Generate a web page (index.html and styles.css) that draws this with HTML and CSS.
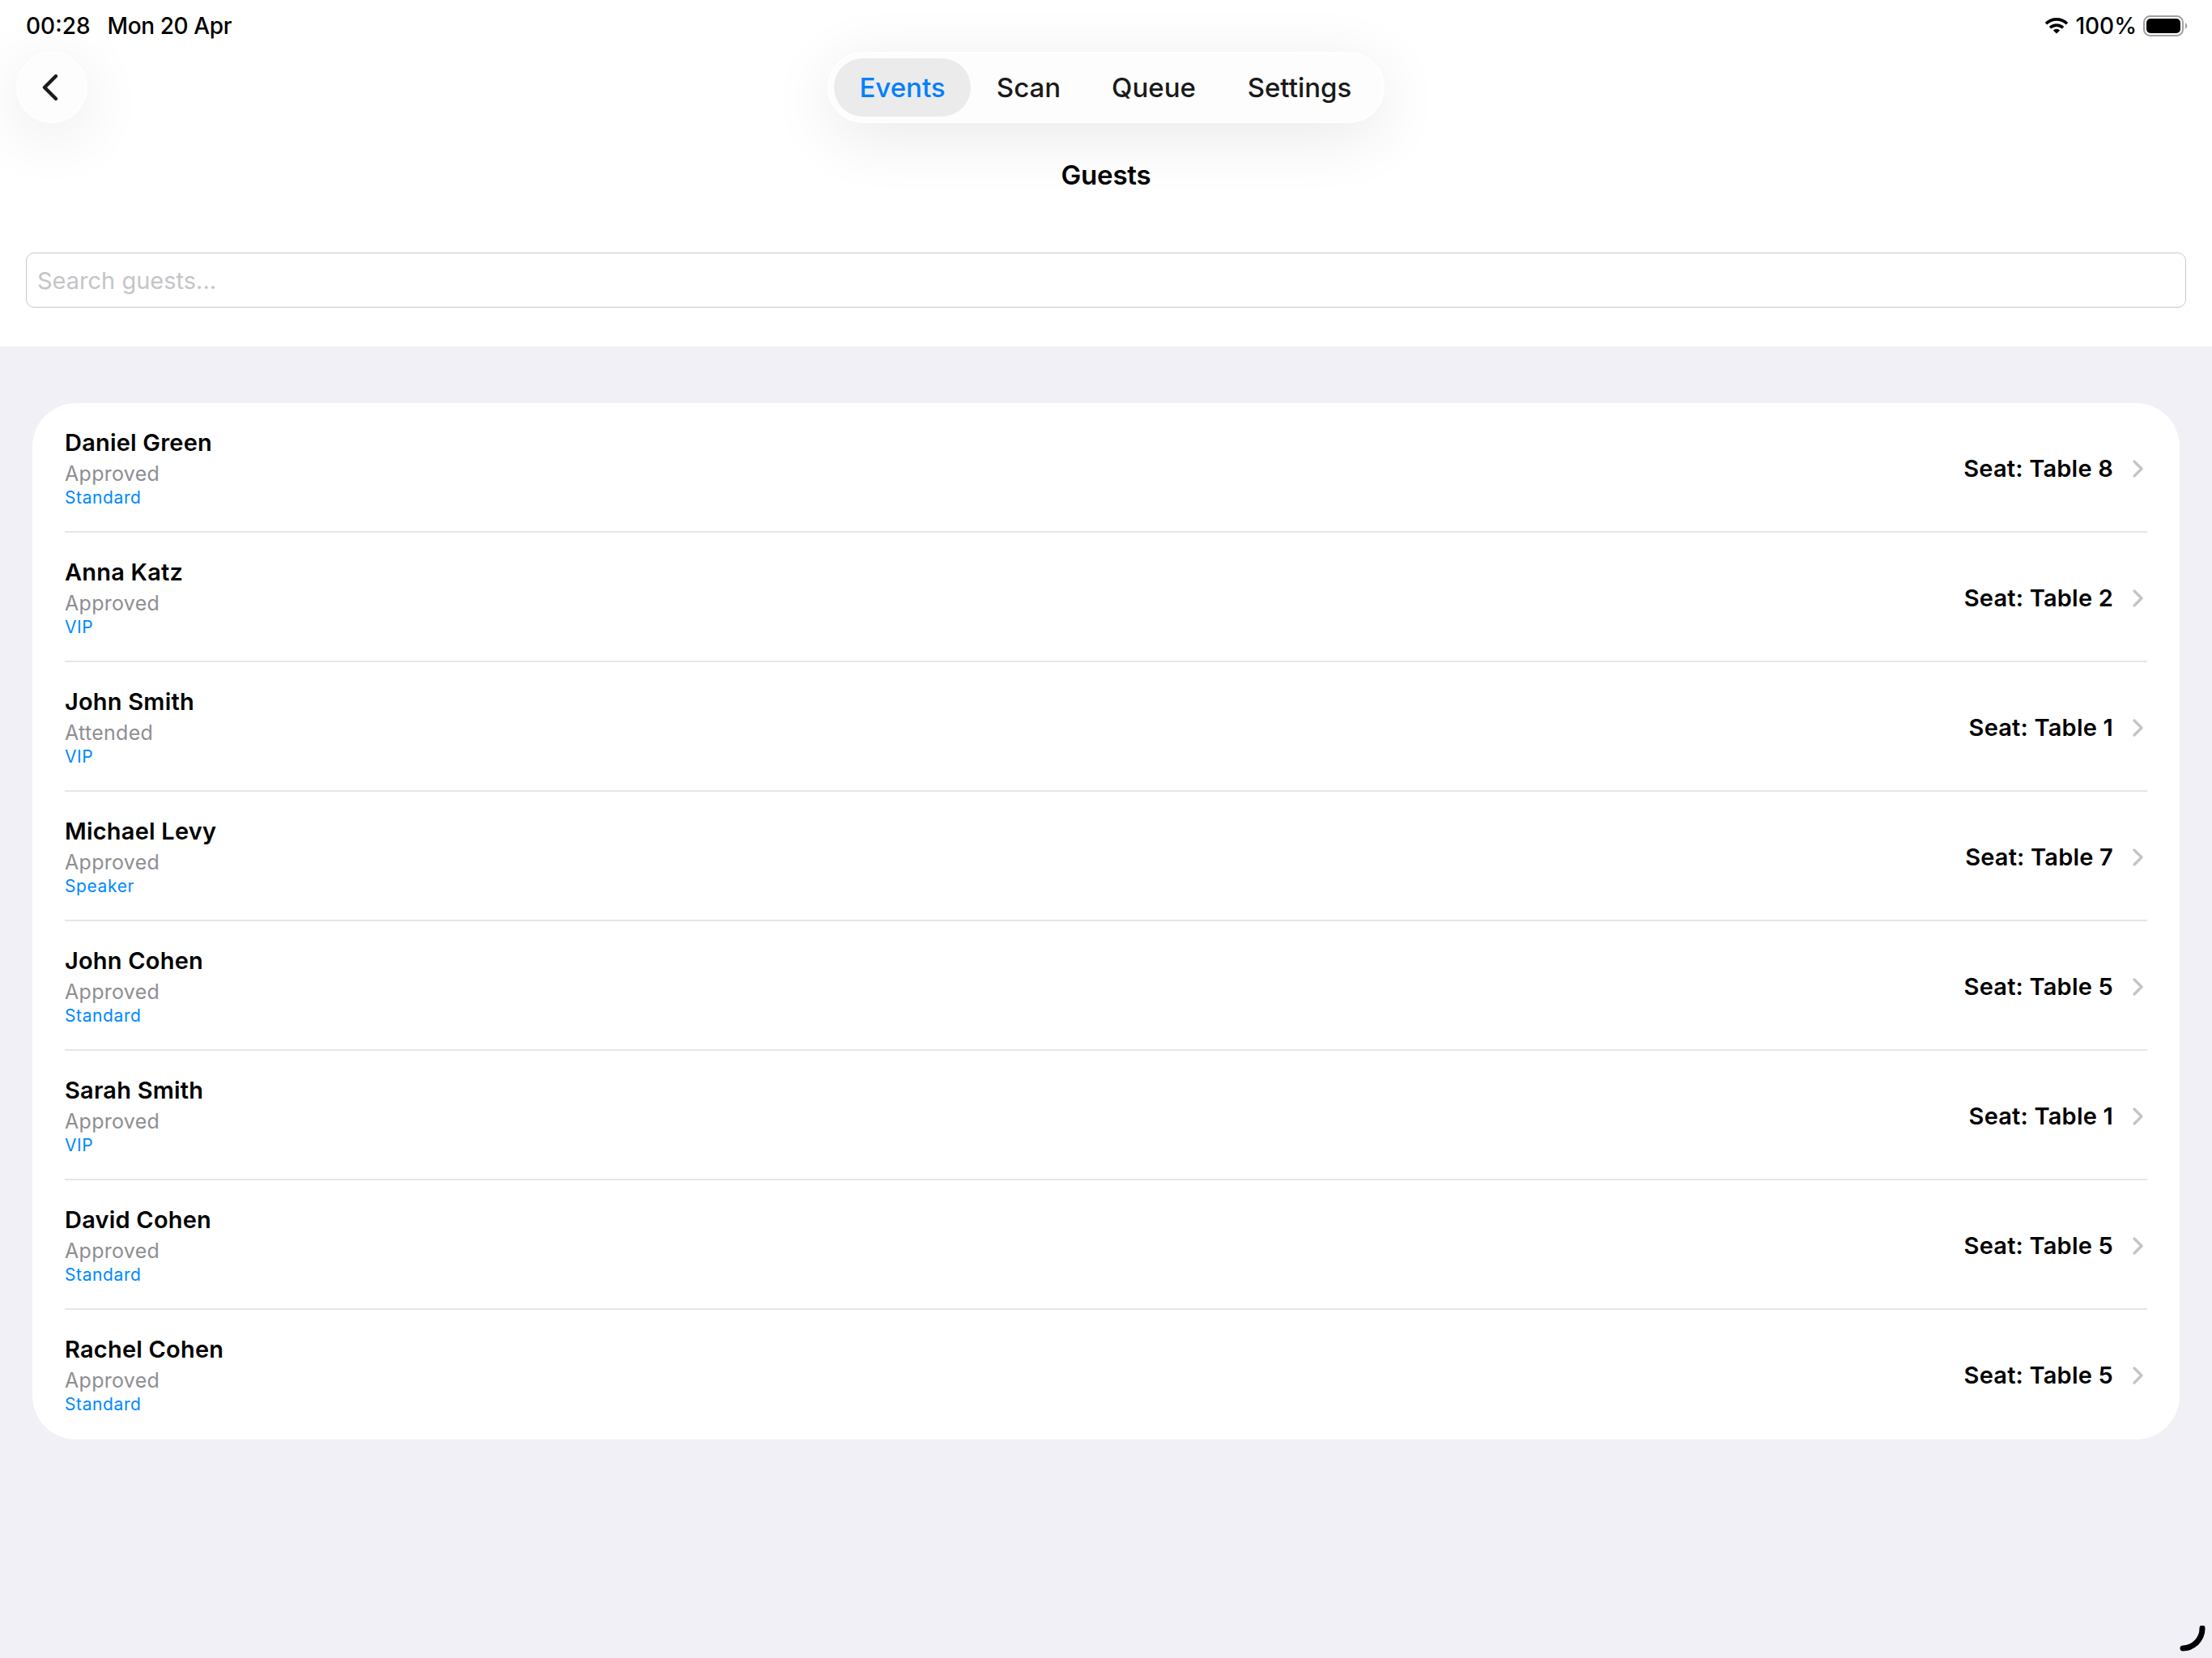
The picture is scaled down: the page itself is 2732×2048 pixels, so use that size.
FILE: index.html
```html
<!DOCTYPE html>
<html lang="en">

<head>
    <meta charset="UTF-8">
    <title>Guests</title>
    <link rel="stylesheet" href="styles.css">
</head>

<body>
    <div class="top">
        <div class="status">
            <span class="time">00:28</span>
            <span class="date">Mon 20 Apr</span>
            <svg class="wifi" viewBox="0 0 30 22">
                <path d="M2 8.2a18.6 18.6 0 0 1 26 0M7 13.3a11.6 11.6 0 0 1 16 0" fill="none" stroke="#000" stroke-width="3.6" />
                <path d="M15 20.6l-4.2-4.2a6 6 0 0 1 8.4 0z" />
            </svg>
            <span class="percent">100%</span>
            <svg class="battery" viewBox="0 0 56 26">
                <rect x="1" y="1" width="48" height="24" rx="7.5" fill="none" stroke="#a0a0a0" stroke-width="2" />
                <rect x="4" y="4" width="42" height="18" rx="5" />
                <path d="M52 9a4.6 4.6 0 0 1 0 8z" fill="#a0a0a0" />
            </svg>
        </div>
        <div class="bar">
            <div class="back">
                <svg viewBox="0 0 22 34">
                    <path d="M18 3L4 17l14 14" />
                </svg>
            </div>
            <div class="tabs">
                <span class="tab active">Events</span>
                <span class="tab scan">Scan</span>
                <span class="tab queue">Queue</span>
                <span class="tab settings">Settings</span>
            </div>
        </div>
        <h1 class="title">Guests</h1>
        <input class="search" type="text" placeholder="Search guests...">
    </div>

    <div class="list">
        <div class="row">
            <div class="guest">
                <p class="name">Daniel Green</p>
                <p class="state">Approved</p>
                <p class="type">Standard</p>
            </div>
            <span class="seat">Seat: Table 8</span>
            <svg class="more" viewBox="0 0 16 24"><path d="M3 3l9 9-9 9" /></svg>
        </div>
        <div class="row">
            <div class="guest">
                <p class="name">Anna Katz</p>
                <p class="state">Approved</p>
                <p class="type">VIP</p>
            </div>
            <span class="seat">Seat: Table 2</span>
            <svg class="more" viewBox="0 0 16 24"><path d="M3 3l9 9-9 9" /></svg>
        </div>
        <div class="row">
            <div class="guest">
                <p class="name">John Smith</p>
                <p class="state">Attended</p>
                <p class="type">VIP</p>
            </div>
            <span class="seat">Seat: Table 1</span>
            <svg class="more" viewBox="0 0 16 24"><path d="M3 3l9 9-9 9" /></svg>
        </div>
        <div class="row">
            <div class="guest">
                <p class="name">Michael Levy</p>
                <p class="state">Approved</p>
                <p class="type">Speaker</p>
            </div>
            <span class="seat">Seat: Table 7</span>
            <svg class="more" viewBox="0 0 16 24"><path d="M3 3l9 9-9 9" /></svg>
        </div>
        <div class="row">
            <div class="guest">
                <p class="name">John Cohen</p>
                <p class="state">Approved</p>
                <p class="type">Standard</p>
            </div>
            <span class="seat">Seat: Table 5</span>
            <svg class="more" viewBox="0 0 16 24"><path d="M3 3l9 9-9 9" /></svg>
        </div>
        <div class="row">
            <div class="guest">
                <p class="name">Sarah Smith</p>
                <p class="state">Approved</p>
                <p class="type">VIP</p>
            </div>
            <span class="seat">Seat: Table 1</span>
            <svg class="more" viewBox="0 0 16 24"><path d="M3 3l9 9-9 9" /></svg>
        </div>
        <div class="row">
            <div class="guest">
                <p class="name">David Cohen</p>
                <p class="state">Approved</p>
                <p class="type">Standard</p>
            </div>
            <span class="seat">Seat: Table 5</span>
            <svg class="more" viewBox="0 0 16 24"><path d="M3 3l9 9-9 9" /></svg>
        </div>
        <div class="row">
            <div class="guest">
                <p class="name">Rachel Cohen</p>
                <p class="state">Approved</p>
                <p class="type">Standard</p>
            </div>
            <span class="seat">Seat: Table 5</span>
            <svg class="more" viewBox="0 0 16 24"><path d="M3 3l9 9-9 9" /></svg>
        </div>
    </div>

    <!-- window resize handle -->
    <svg class="corner" viewBox="0 0 40 40">
        <path d="M28 3A24.5 24.5 0 0 1 4 28" />
    </svg>
</body>

</html>
```
FILE: styles.css
```css
* {
    padding: 0;
    margin: 0;
    box-sizing: border-box;
}

body {
    width: 2732px;
    height: 2048px;
    overflow: hidden;
    background: #f1f0f6;
    color: #000;
    font-family: Inter, "Noto Sans", sans-serif;
}

.top {
    height: 428px;
    background: #fff;
    overflow: hidden;
}

.status {
    display: flex;
    align-items: center;
    height: 64px;
    padding: 0 29px 0 32px;
    font-size: 28px;
    font-weight: 500;
    line-height: 64px;
}

.date {
    margin-left: 21px;
    letter-spacing: -0.4px;
}

.wifi {
    width: 30px;
    height: 22px;
    margin-left: auto;
}

.percent {
    margin: 0 8px 0 8px;
}

.battery {
    width: 56px;
    height: 26px;
}

.bar {
    display: grid;
    grid-template-columns: 1fr auto 1fr;
    height: 88px;
    padding: 0 20px;
}

.back {
    display: flex;
    align-items: center;
    width: 88px;
    height: 88px;
    padding-left: 29px;
    border: 2px solid #fff;
    border-radius: 50%;
    background: #fdfdfd;
    box-shadow: 0 16px 80px rgba(0, 0, 0, .09);
}

.back svg {
    width: 22px;
    height: 34px;
    fill: none;
    stroke: #1a1a1a;
    stroke-width: 4.4;
    stroke-linecap: round;
    stroke-linejoin: round;
}

.tabs {
    display: flex;
    width: 688px;
    height: 88px;
    padding: 6px;
    border: 2px solid #fff;
    border-radius: 44px;
    background: #fdfdfd;
    box-shadow: 0 16px 80px rgba(0, 0, 0, .09);
}

.tab {
    height: 72px;
    color: #1a1a1a;
    font-size: 33px;
    font-weight: 500;
    line-height: 72px;
    text-align: center;
}

.active {
    width: 169px;
    border-radius: 36px;
    background: #ebebeb;
    color: #0080fa;
}

.scan {
    width: 143px;
}

.queue {
    width: 166px;
}

.settings {
    width: 194px;
}

.title {
    height: 64px;
    margin-top: 32px;
    font-size: 33px;
    font-weight: 600;
    letter-spacing: -0.2px;
    line-height: 64px;
    text-align: center;
}

.search {
    display: block;
    width: 2668px;
    height: 68px;
    margin: 64px 32px 0;
    padding: 0 13px;
    border: 1px solid #c8c8c8;
    border-radius: 10px;
    outline: none;
    background: #fff;
    font-family: inherit;
    font-size: 29px;
}

.search::placeholder {
    color: #c5c5c7;
    opacity: 1;
}

.list {
    margin: 70px 40px 0;
    padding: 0 40px;
    border-radius: 54px;
    background: #fff;
}

.row {
    display: flex;
    align-items: center;
    height: 160px;
    padding-top: 4px;
    border-bottom: 2px solid #e6e6e6;
}

.row:last-child {
    border-bottom-color: transparent;
}

.guest {
    flex: 1;
    align-self: flex-start;
    padding-top: 26px;
}

.name {
    font-size: 29px;
    font-weight: 600;
    letter-spacing: 0.2px;
    line-height: 38px;
}

.state {
    color: #8e8e93;
    font-size: 25px;
    letter-spacing: 0.3px;
    line-height: 38px;
}

.type {
    color: #0088ff;
    font-size: 21px;
    letter-spacing: 0.6px;
    line-height: 22px;
}

.seat {
    font-size: 29px;
    font-weight: 600;
    letter-spacing: 0.2px;
    line-height: 40px;
}

.more {
    width: 16px;
    height: 24px;
    margin: 0 3px 0 23px;
    fill: none;
    stroke: #c5c5c7;
    stroke-width: 3.4;
    stroke-linecap: round;
    stroke-linejoin: round;
}

.corner {
    position: absolute;
    right: 0;
    bottom: 0;
    width: 40px;
    height: 40px;
    fill: none;
    stroke: #000;
    stroke-width: 7;
    stroke-linecap: round;
}
```
